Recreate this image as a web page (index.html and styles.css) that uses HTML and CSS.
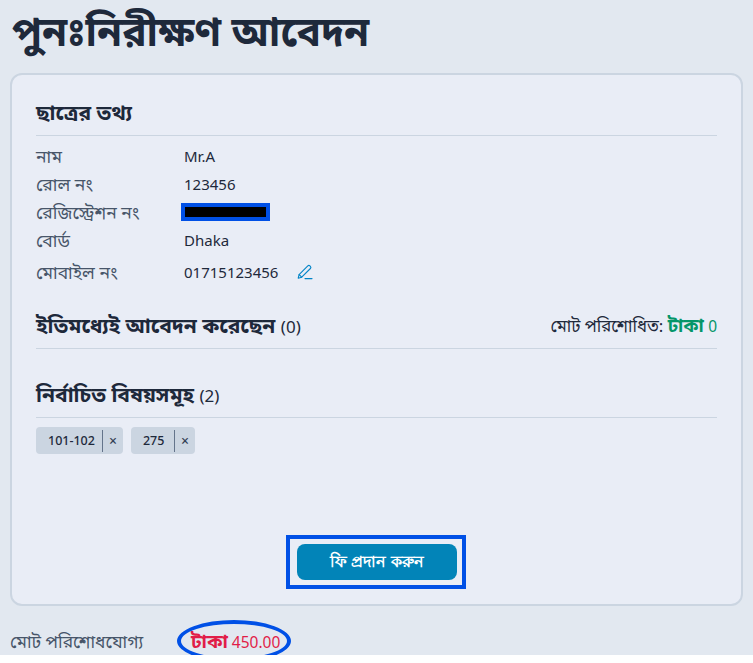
FILE: index.html
```html
<!DOCTYPE html>
<html lang="bn">
<head>
<meta charset="utf-8">
<title>পুনঃনিরীক্ষণ আবেদন</title>
<link rel="stylesheet" href="styles.css">
</head>
<body>
<div class="page">
  <h1 class="title">পুনঃনিরীক্ষণ আবেদন</h1>
  <main class="card">
    <section>
      <h2 class="heading">ছাত্রের তথ্য</h2>
      <div class="rows">
        <div class="row r-a"><span class="label">নাম</span><span class="value">Mr.A</span></div>
        <div class="row r-a"><span class="label">রোল নং</span><span class="value">123456</span></div>
        <div class="row r-a"><span class="label">রেজিস্ট্রেশন নং</span><span class="redact"></span></div>
        <div class="row r-a"><span class="label">বোর্ড</span><span class="value">Dhaka</span></div>
        <div class="row r-m"><span class="label">মোবাইল নং</span><span class="value">01715123456</span>
          <svg class="edit" viewBox="0 0 16 16" width="16" height="16" fill="none" stroke="#0284c7" stroke-width="1.1" stroke-linejoin="round" stroke-linecap="round"><path d="M1.2 14.2l.9-3.6L10.8 1.9a1.5 1.5 0 0 1 2.1 0l.5.5a1.5 1.5 0 0 1 0 2.1L4.7 13.2z"/><path d="M2.1 10.6l2.6 2.6"/><path d="M8 14.6h7"/></svg>
        </div>
      </div>
    </section>
    <section class="sec-applied">
      <div class="heading split">
        <h2 class="h-inline">ইতিমধ্যেই আবেদন করেছেন <span class="count">(0)</span></h2>
        <span class="paid">মোট পরিশোধিত: <b class="taka">টাকা</b> <span class="paid-n">0</span></span>
      </div>
    </section>
    <section class="sec-subjects">
      <h2 class="heading">নির্বাচিত বিষয়সমূহ <span class="count">(2)</span></h2>
      <div class="chips">
        <span class="chip"><span class="chip-name">101-102</span><span class="chip-x">×</span></span>
        <span class="chip"><span class="chip-name">275</span><span class="chip-x">×</span></span>
      </div>
    </section>
    <div class="actions">
      <div class="frame"><button class="pay" type="button">ফি প্রদান করুন</button></div>
    </div>
  </main>
  <footer class="total">
    <span class="total-label">মোট পরিশোধযোগ্য</span>
    <span class="total-amt"><b>টাকা</b> 450.00<span class="oval"></span></span>
  </footer>
</div>
</body>
</html>
```
FILE: styles.css
```css
* { box-sizing: border-box; }
html, body { margin: 0; padding: 0; background: #fff; }
body { font-family: "Noto Sans", "Open Sans", "Noto Sans Bengali", sans-serif; color: #1e293b; }
.page { height: 655px; background: #e2e8f0; padding: 0 10px; position: relative; }
.title { margin: 0; height: 73px; font-size: 40.6px; line-height: 62px; font-weight: 700; color: #1e293b; padding-left: 2px; }
.card { height: 533px; background: #e9edf6; border: 2px solid #cbd5e1; border-radius: 12px; padding: 24px 24px 0; display: flex; flex-direction: column; }
.heading { margin: 0; height: 37px; border-bottom: 1px solid #cbd5e1; font-size: 21px; line-height: 26px; font-weight: 700; color: #1e293b; }
.count { font-weight: 400; font-size: 17px; }
.rows { display: flex; flex-direction: column; padding-top: 6px; }
.row { display: flex; align-items: center; font-size: 14px; }
.r-a { height: 28px; }
.r-m { height: 35px; }
.label { width: 148px; color: #475569; font-size: 17.5px; line-height: 24px; }
.value { color: #1e293b; font-size: 15px; }
.redact { width: 89px; height: 18px; margin-left: -3px; background: #000; border: 4px solid #0050e6; }
.edit { margin-left: 19px; }
.sec-applied { margin-top: 23px; }
.split { display: flex; justify-content: space-between; align-items: flex-start; }
.h-inline { margin: 0; font-size: 21px; line-height: 26px; font-weight: 700; }
.paid { font-size: 16.8px; line-height: 26px; font-weight: 400; color: #1e293b; }
.taka { color: #059669; font-size: 18.6px; }
.paid-n { color: #059669; font-size: 15.5px; }
.sec-subjects { margin-top: 32px; }
.chips { display: flex; gap: 8px; padding-top: 9px; }
.chip { display: flex; align-items: center; height: 27px; background: #cbd5e1; border-radius: 4px; font-size: 12.5px; font-weight: 500; color: #1e293b; }
.chip-name { min-width: 44px; padding: 0 7px 0 12px; line-height: 22px; border-right: 1px solid #64748b; }
.chip-x { padding: 0 6px; font-size: 14px; color: #334155; }
.actions { margin-top: auto; padding-bottom: 15px; display: flex; justify-content: center; }
.frame { width: 180px; height: 54px; margin-right: 1px; border: 4px solid #0050e6; display: flex; align-items: center; justify-content: center; }
.pay { width: 160px; height: 36px; margin-left: 2px; background: #0284b8; color: #fff; border: 0; border-radius: 8px; font: 600 16.3px "Noto Sans", sans-serif; padding: 0; }
.total { display: flex; align-items: center; height: 49px; padding-top: 22px; font-size: 17.4px; }
.total-label { width: 180px; color: #475569; }
.total-amt { position: relative; color: #e11d48; font-size: 15.5px; margin-left: 1px; }
.total-amt b { font-size: 19px; }
.oval { position: absolute; left: -14px; top: -8px; width: 114px; height: 42px; border: 4px solid #0050e6; border-radius: 50%; }
```
